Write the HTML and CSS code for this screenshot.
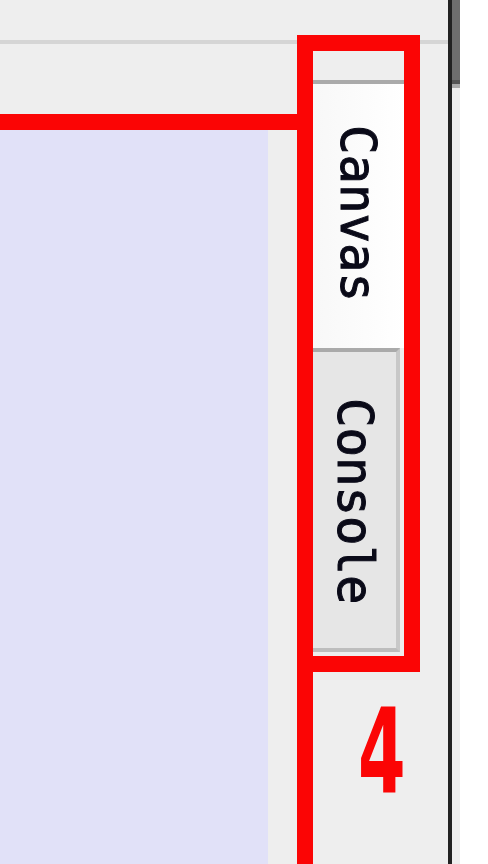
FILE: index.html
```html
<!DOCTYPE html>
<html>
<head>
<meta charset="utf-8">
<link rel="stylesheet" href="styles.css">
</head>
<body>
<div class="window">
  <div class="main">
    <div class="toolbar"></div>
    <div class="divider"></div>
    <div class="workspace">
      <div class="editor">
        <div class="editor-header"></div>
        <div class="editor-body">
          <div class="canvas"></div>
        </div>
      </div>
      <div class="tabstrip">
        <div class="tab tab-active"><span class="tab-label">Canvas</span></div>
        <div class="tab tab-inactive"><span class="tab-label">Console</span></div>
      </div>
    </div>
  </div>
  <div class="vsplit"></div>
  <div class="scrollbar"><div class="thumb"></div></div>
  <div class="outside"></div>
</div>
<div class="annot annot-box"></div>
<div class="annot annot-line"></div>
<div class="annot annot-bar"></div>
<div class="annot-num">4</div>
</body>
</html>
```

FILE: styles.css
```css
html, body {
  margin: 0;
  padding: 0;
}
body {
  width: 488px;
  height: 864px;
  overflow: hidden;
  position: relative;
  background: #ffffff;
  font-family: "DejaVu Sans", sans-serif;
}
.window {
  display: flex;
  height: 864px;
}
.main {
  width: 448px;
  display: flex;
  flex-direction: column;
  background: #eeeeee;
}
.toolbar {
  height: 40px;
}
.divider {
  height: 4px;
  background: #d5d5d5;
}
.workspace {
  flex: 1;
  display: flex;
}
.editor {
  width: 297px;
  display: flex;
  flex-direction: column;
}
.editor-header {
  height: 86px;
}
.editor-body {
  flex: 1;
  padding-right: 29px;
  display: flex;
}
.canvas {
  flex: 1;
  background: #e1e1f8;
}
.tabstrip {
  flex: 1;
  padding-top: 36px;
  padding-left: 16px;
  display: flex;
  flex-direction: column;
  align-items: flex-start;
}
.tab {
  box-sizing: border-box;
  display: flex;
  align-items: center;
  justify-content: center;
  border-top: 4px solid #aaaaaa;
}
.tab-active {
  width: 91px;
  height: 268px;
  background: linear-gradient(to right, #f8f8f8, #ffffff);
  padding-bottom: 5px;
  padding-right: 2px;
}
.tab-inactive {
  width: 87px;
  height: 304px;
  background: #e6e6e6;
  border-right: 4px solid #c8c8c8;
  border-bottom: 4px solid #bdbdbd;
  padding-top: 2px;
}
.tab-label {
  writing-mode: vertical-rl;
  font-family: "DejaVu Sans Mono", monospace;
  font-size: 49px;
  line-height: 49px;
  color: #0a0a18;
  -webkit-text-stroke: 1px #0a0a18;
}
.vsplit {
  width: 4px;
  background: #222222;
}
.scrollbar {
  width: 8px;
  background: #eeeeee;
}
.thumb {
  height: 80px;
  background: #6e6e6e;
  border-bottom: 4px solid #555555;
  box-shadow: 0 4px 0 #aaaaaa;
}
.outside {
  flex: 1;
  background: #ffffff;
}
.annot {
  position: absolute;
  background: #fb0505;
}
.annot-box {
  left: 297px;
  top: 35px;
  width: 123px;
  height: 637px;
  box-sizing: border-box;
  border: 16px solid #fb0505;
  background: transparent;
}
.annot-line {
  left: 297px;
  top: 672px;
  width: 16px;
  height: 192px;
}
.annot-bar {
  left: 0;
  top: 114px;
  width: 297px;
  height: 16px;
}
.annot-num {
  position: absolute;
  left: 358px;
  top: 693px;
  font-family: "DejaVu Sans", sans-serif;
  font-weight: bold;
  font-size: 118px;
  line-height: 118px;
  color: #fb0505;
  transform: scaleX(0.58);
  transform-origin: left top;
}
```
